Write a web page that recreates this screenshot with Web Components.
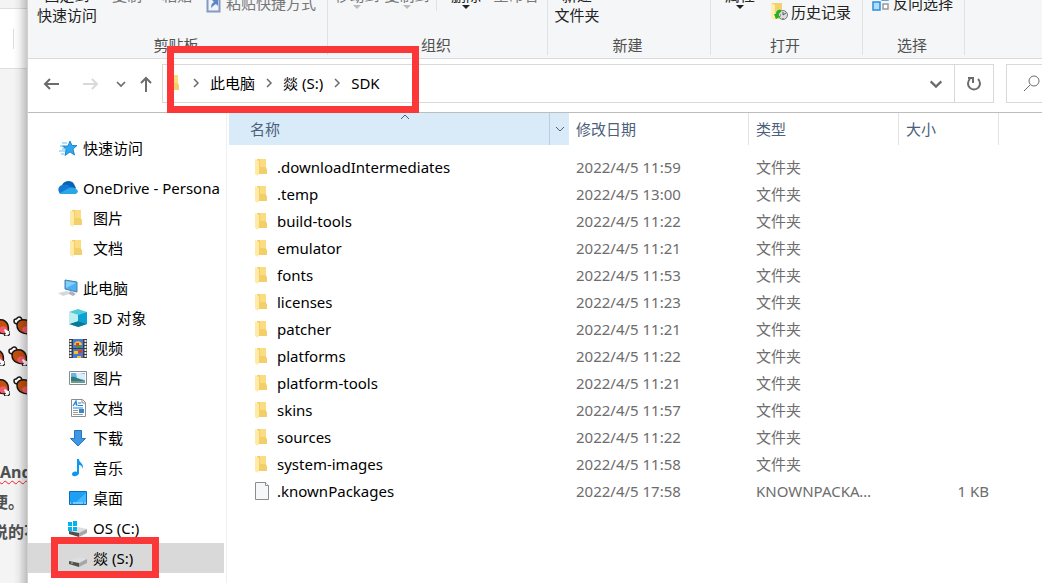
<!DOCTYPE html>
<html lang="zh-CN">
<head>
<meta charset="utf-8">
<title>SDK</title>
<style>
html, body { height: 100%; margin: 0; }
body {
  display: flex; overflow: hidden; background: #f4f4f4; color: #000;
  font: 15px/20px "Noto Sans", "Noto Sans CJK SC", sans-serif;
}
</style>
</head>
<body>
<editor-backdrop></editor-backdrop>
<explorer-window>
  <ribbon-bar slot="ribbon">
    <ribbon-group label="剪贴板" style="--w:300px">
      <ribbon-button style="--x:4px;--w:70px">固定到<br>快速访问</ribbon-button>
      <ribbon-button muted up style="--w:50px">复制</ribbon-button>
      <ribbon-button muted up style="--w:50px">粘贴</ribbon-button>
      <ribbon-button muted mid icon="shortcut" style="--x:2px;--w:112px">粘贴快捷方式</ribbon-button>
    </ribbon-group>
    <ribbon-group label="组织" style="--w:220px">
      <ribbon-button muted up caret style="--x:4px;--w:50px">移动到</ribbon-button>
      <ribbon-button muted up caret style="--w:50px">复制到</ribbon-button>
      <ribbon-button up caret divided style="--x:4px;--w:60px">删除</ribbon-button>
      <ribbon-button muted up style="--w:40px">重命名</ribbon-button>
    </ribbon-group>
    <ribbon-group label="新建" style="--w:163px">
      <ribbon-button style="--x:4px;--w:50px">新建<br>文件夹</ribbon-button>
    </ribbon-group>
    <ribbon-group label="打开" style="--w:152px">
      <ribbon-button up caret style="--x:4px;--w:50px">属性</ribbon-button>
      <ribbon-button low icon="history" style="--x:4px;--w:82px">历史记录</ribbon-button>
    </ribbon-group>
    <ribbon-group label="选择" style="--w:102px">
      <ribbon-button mid icon="invert" style="--x:7px;--w:84px">反向选择</ribbon-button>
    </ribbon-group>
  </ribbon-bar>
  <address-bar slot="address"></address-bar>
  <nav-tree slot="nav">
    <nav-item icon="star">快速访问</nav-item>
    <nav-item icon="cloud" gap>OneDrive - Persona</nav-item>
    <nav-item icon="folder" child>图片</nav-item>
    <nav-item icon="folder" child>文档</nav-item>
    <nav-item icon="pc" gap>此电脑</nav-item>
    <nav-item icon="cube" child>3D 对象</nav-item>
    <nav-item icon="video" child>视频</nav-item>
    <nav-item icon="picture" child>图片</nav-item>
    <nav-item icon="document" child>文档</nav-item>
    <nav-item icon="download" child>下载</nav-item>
    <nav-item icon="music" child>音乐</nav-item>
    <nav-item icon="desktop" child>桌面</nav-item>
    <nav-item icon="osdrive" child>OS (C:)</nav-item>
    <nav-item icon="drive" child selected>燚 (S:)</nav-item>
  </nav-tree>
  <file-list slot="files"></file-list>
</explorer-window>

<script>
const ICONS = {
  folder: ['0 0 20 20', '<path d="M4 2h9v9l1 1v5H5z" fill="#f3cf6c"/><path d="M7 2h6v8H7z" fill="#fbdc80"/><path d="M2 2l4 2v11l-1 4-3-2z" fill="#ffeaa6"/>'],
  file: ['0 0 20 20', '<path d="M2.500 1.500h10l3 3v14h-13z" fill="#f6f7f8" stroke="#8d8d8d"/><path d="M12.500 1.500v3h3" fill="#fff" stroke="#8d8d8d"/>'],
  shortcut: ['0 0 16 20', '<path d="M1.500 2.500h12v16h-12z" fill="#eef2fa" stroke="#8599bd" stroke-width="2"/><path d="M5 15c0-3 1-5 3-6L6 7h6v6l-2-2c-2 1-3 2-5 4z" fill="#5b86c2"/>'],
  history: ['0 0 20 20', '<path d="M2 1h11v16l-8 0-3-2z" fill="#f4d16f"/><path d="M2 1l4 2v12l-1 3-3-2z" fill="#ffeeb0"/><circle cx="14" cy="13" r="4.500" fill="#ddd" stroke="#777"/><path d="M14 10v3l3-2M11 13h1M14 17v-1" fill="none" stroke="#555"/><path d="M12 8c-3-1-5 1-5 4H5l2 5 5-3H9c0-2 1-3 3-4z" fill="#19b523"/>'],
  invert: ['0 0 20 20', '<g stroke-width="1.500"><path d="M3 1h5v5H3zM12 11h5v5h-5z" fill="#fff" stroke="#999"/><path d="M11 1h6v6h-6zM2 9h7v8H2z" fill="#b4dcfb" stroke="#2a8fe0"/></g>'],
  star: ['0 0 20 20', '<path d="M12 3l2 4.500h5l-4 3.500 1.500 6L12 14l-5 3.500 1-6L4.500 8H10z" fill="#2ea8ee" stroke="#1473bd" stroke-width=".8"/><path d="M4 5h5M2 8h4M4 11h4M1 13h6M3 16h3" stroke="#5fc1f5" stroke-width="1"/>'],
  cloud: ['0 0 20 20', '<path d="M4 7c2-4 9-6 12-1l2 4-3 3L4 9z" fill="#0a62b6"/><path d="M1 14c-2-4 1-7 4-7 3-1 5-1 7 2l4 3-6 4H4c-2 0-3-1-3-2z" fill="#137ad4"/><path d="M2 15l9-5c3-1 6 0 7 1 3 1 2 5-1 5H5c-1 0-2 0-3-1z" fill="#28a8ea"/>'],
  pc: ['0 0 20 20', '<path d="M7 2l12 2v10L7 11z" fill="#4bb1f4" stroke="#4a7fa8"/><path d="M8 3l10 2-10 5z" fill="#85d0fb"/><path d="M0 15l9-2 5 2-9 3z" fill="#d4d8dc"/><path d="M12 13l3 1 3 2-3 2-4-2z" fill="#acb2b8"/>'],
  cube: ['0 0 20 20', '<path d="M1 4l9 3v12l-9-3z" fill="#a8e6ec"/><path d="M10 7l9-3v12l-9 3z" fill="#1bb2dc"/><path d="M1 4l9-3 9 3-9 3z" fill="#51cbd6"/><path d="M1 16l9-3 9 3-9 3z" fill="#087a98"/><path d="M1 4l9 3v6l-9 3z" fill="#bceff1"/><path d="M10 7l9-3v12l-9-3z" fill="#0aa1d5"/>'],
  video: ['0 0 20 20', '<path d="M1 1h18v19H1z" fill="#3d3d3d"/><path d="M5 1h10v9H5zM5 11h10v9H5z" fill="#4777df"/><path d="M6 7c0-5 8-5 8 0z" fill="#f5c51e"/><path d="M8 5h3v4H8z" fill="#d44322"/><path d="M8 8h5v2H8z" fill="#3f9a38"/><path d="M10 12h4v3h-4z" fill="#d44322"/><path d="M6 13h4v3H6zM9 18h4v2H9z" fill="#f3c51e"/><path d="M2.500 2v18M17.500 2v18" stroke="#e9e9e9" stroke-width="2" stroke-dasharray="2 1"/>'],
  picture: ['0 0 20 20', '<path d="M1.500 3.500h17v13h-17z" fill="#fff" stroke="#8b8b8b"/><path d="M3 5h14v10H3z" fill="#6cb2eb"/><path d="M8 5c3-1 7 1 9 1v6l-8-2z" fill="#d8effb"/><path d="M3 9c4-1 6 2 14 4v2H3z" fill="#377c75"/><path d="M3 13h14v2H3z" fill="#699c93"/>'],
  document: ['0 0 20 20', '<path d="M3.500 1.500h11l3 3v14h-14z" fill="#fff" stroke="#8d8d8d"/><path d="M14 2v3h3" fill="none" stroke="#8d8d8d"/><path d="M5 8l3-5 1 5M6 6h3M10 5h3M10 7.500h5M5 10h10" fill="none" stroke="#2185d8" stroke-width="1.200"/><path d="M5 12.500h5M5 14.500h5M5 16.500h10" stroke="#999"/><path d="M11 11h5v4h-5z" fill="#3987c5"/>'],
  download: ['0 0 20 20', '<path d="M6.500 2.500h7v8h4L10 18 2.500 10.500h4z" fill="#3e96e4" stroke="#2476bd"/>'],
  music: ['0 0 20 20', '<path d="M9 1h2c0 4 5 4 4 10-1-3-2-4-4-4v8c0 3-7 5-7 1 0-2 3-3 5-2z" fill="#0f96f3"/>'],
  desktop: ['0 0 20 20', '<path d="M1.500 3.500h17v13h-17z" fill="#1d9ff5" stroke="#0871bd"/><path d="M8 14L18 5v9z" fill="#44b7ff"/><path d="M2 15h1m2 0h10m1 0h2" stroke="#d6f3ff"/>'],
  drive: ['0 0 20 20', '<path d="M1 13l9-4 9 2-8 5z" fill="#dedee0"/><path d="M1 13l10 2v4L1 16z" fill="#505050"/><path d="M11 15l8-4v4l-8 4z" fill="#a7a7a9"/><path d="M3 15h2" stroke="#a6ce9b"/>'],
  osdrive: ['0 0 20 20', '<path d="M1 13l9-4 9 2-8 5z" fill="#dedee0"/><path d="M1 13l10 2v4L1 16z" fill="#505050"/><path d="M11 15l8-4v4l-8 4z" fill="#a7a7a9"/><path d="M0 4h4v4H0zM5 3h4v5H5zM0 9h4v4H0zM5 9h4v4H5z" fill="#00b4ef"/>'],
  back: ['0 0 20 20', '<path d="M17 10H3M8 5l-5 5 5 5" fill="none" stroke="currentColor" stroke-width="2"/>'],
  forward: ['0 0 20 20', '<path d="M3 10h14M12 5l5 5-5 5" fill="none" stroke="currentColor" stroke-width="2"/>'],
  up: ['0 0 20 20', '<path d="M10 18V4M5 9l5-5 5 5" fill="none" stroke="currentColor" stroke-width="2"/>'],
  down: ['0 0 12 12', '<path d="M2 4l4 4 4-4" fill="none" stroke="currentColor" stroke-width="1.700"/>'],
  thin: ['0 0 12 12', '<path d="M2 4l4 4 4-4" fill="none" stroke="currentColor"/>'],
  sort: ['0 0 12 12', '<path d="M2 8l4-4 4 4" fill="none" stroke="currentColor"/>'],
  chevron: ['0 0 12 12', '<path d="M4 2l4 4-4 4" fill="none" stroke="currentColor" stroke-width="1.500"/>'],
  refresh: ['0 0 20 20', '<path d="M14 5a6 6 0 1 1-8 0M4 4h5v5" fill="none" stroke="currentColor" stroke-width="2"/>'],
  search: ['0 0 20 20', '<circle cx="13" cy="7" r="5" fill="none" stroke="currentColor"/><path d="M9 11l-6 6" stroke="currentColor"/>'],
  meat: ['0 0 20 20', '<path d="M5 8C3 8 1 7 1 5s1-2 2-2 1-2 3-2 3 2 3 4" fill="#fff" stroke="#161616" stroke-width="1.500"/><path d="M4 9c0-4 4-6 9-5 5 2 6 7 5 12-5 3-14 1-14-7z" fill="#c4500d" stroke="#161616" stroke-width="1.500"/><path d="M9 13c1-3 6-4 8-1l1 4c-3 2-8 2-9-3z" fill="#f5596c"/><path d="M14 14l2 4c1 1 2 0 2-1 2 0 2-2 0-2l-3-2z" fill="#fff"/><path d="M14 18l1 2h3l2-2v-3" fill="none" stroke="#161616" stroke-width="1.200"/>'],
};

function define(name, css, render) {
  customElements.define(name, class extends HTMLElement {
    connectedCallback() {
      if (this.shadowRoot) return;
      const root = this.attachShadow({ mode: 'open' });
      const t = document.createElement('template');
      t.innerHTML = `<style>${css}</style>${render(this)}`;
      root.append(t.content.cloneNode(true));
    }
  });
}

define('ex-icon',
  `:host{display:block;flex:none;width:var(--size,20px);height:var(--size,20px)} svg{display:block;width:100%;height:100%}`,
  el => { const [box, art] = ICONS[el.getAttribute('name')]; return `<svg viewBox="${box}" aria-hidden="true">${art}</svg>`; });

define('editor-backdrop', `
  :host{display:flex;flex-direction:column;flex:0 0 27px;position:relative;overflow:hidden;background:#f4f4f4;color:#505050;font-weight:700}
  :host::after{content:"";position:absolute;inset:0 0 0 auto;width:14px;background:linear-gradient(90deg,#0000,#0000000a 40%,#00000038)}
  .toolbar{flex:none;height:59px;margin-top:8px;border:solid #dedede;border-width:1px 0;background:#fff;display:flex;align-items:center}
  .toolbar i{width:1px;height:20px;margin-left:13px;background:#ddd}
  .emoji{display:grid;gap:10px;margin-top:247px}
  .emoji div{display:flex;gap:3px;margin-left:-10px}
  .emoji .odd{margin-left:-15px}
  p{margin:0;display:flex;white-space:nowrap;height:30px;line-height:30px;font-size:16px}
  .first{margin-top:61px}
  .shift{margin-left:-8px}
  .spell{text-decoration:underline wavy #e22 1px;text-underline-offset:2px}
`, () => {
  const pair = '<ex-icon name="meat"></ex-icon><ex-icon name="meat"></ex-icon>';
  return `<div class="toolbar"><i></i></div>
    <div class="emoji"><div>${pair}</div><div class="odd">${pair}</div><div>${pair}</div></div>
    <p class="first"><span class="spell">Android</span></p><p class="shift">便。</p><p class="shift">说的不</p>`;
});

define('explorer-window', `
  :host{display:flex;flex-direction:column;flex:1;min-width:0;background:#fff;border-left:1px solid #d0d0d0}
  .body{display:flex;flex:1;min-height:0;border-top:1px solid #bdbdbd}
`, () => `<slot name="ribbon"></slot><slot name="address"></slot>
  <div class="body"><slot name="nav"></slot><slot name="files"></slot></div>`);

define('ribbon-bar', `
  :host{display:flex;flex:none;height:58px;overflow:hidden;background:#f5f6f7;border-bottom:1px solid #dadbdc}
`, () => `<slot></slot>`);

define('ribbon-group', `
  :host{display:flex;flex-direction:column;justify-content:flex-end;flex:none;box-sizing:border-box;width:var(--w);height:55px;border-right:1px solid #e0e1e2}
  .items{display:flex;align-items:flex-end;height:35px}
  .label{text-align:center;color:#505050;padding-right:3px}
`, el => `<div class="items"><slot></slot></div><div class="label">${el.getAttribute('label')}</div>`);

define('ribbon-button', `
  :host{display:block;flex:none;width:var(--w);margin-left:var(--x,0);padding-bottom:10px}
  :host([up]){padding-bottom:30px}
  :host([up][caret]){padding-bottom:26px}
  :host([mid]){padding-bottom:22px}
  :host([low]){padding-bottom:13px}
  :host([divided]){background:linear-gradient(#e0e1e2,#e0e1e2) 0 0/1px calc(100% - 24px) no-repeat}
  button{display:flex;align-items:center;justify-content:center;width:100%;padding:0;border:0;background:none;color:#222;font:inherit;white-space:nowrap;gap:2px}
  :host([muted]) button{color:#777}
  :host([caret]) button{flex-direction:column;gap:0}
  i{width:0;height:0;border:solid transparent;border-width:4px 4px 0;border-top-color:#222}
  :host([muted]) i{border-top-color:#bbb}
`, el => {
  const icon = el.getAttribute('icon');
  return `<button type="button">${icon ? `<ex-icon name="${icon}"></ex-icon>` : ''}<span><slot></slot></span>${el.hasAttribute('caret') ? '<i></i>' : ''}</button>`;
});

define('address-bar', `
  :host{display:flex;align-items:center;flex:none;height:53px;box-sizing:border-box;padding:0 0 4px 14px;color:#6c6c6c}
  button{display:flex;align-items:center;justify-content:center;padding:0;border:0;background:none;color:inherit;font:inherit;height:30px}
  .nav{width:20px;margin-right:18px}
  .nav:disabled{color:#d9d9d9;margin-right:14px}
  .recent{width:14px;margin-right:8px}
  .up{width:20px;margin-right:6px}
  .box{display:flex;align-items:center;flex:1;min-width:0;box-sizing:border-box;height:39px;border:1px solid #d9d9d9;position:relative}
  nav{display:flex;align-items:center;flex:1;padding:0 0 2px 2px;gap:7px;--size:12px}
  nav .folder{--size:20px;margin-right:-2px}
  nav a{color:#000;text-decoration:none;white-space:nowrap;margin:0 1px}
  .drop{width:36px;--size:16px}
  .refresh{width:39px;height:37px;border-left:1px solid #d9d9d9}
  .find{display:flex;align-items:center;flex:0 0 36px;box-sizing:border-box;height:39px;margin-left:12px;padding-left:14px;border:1px solid #d9d9d9;border-right:0;overflow:hidden}
  .mark{position:absolute;left:4px;top:-19px;width:238px;height:53px;border:7px solid #fc3737;pointer-events:none}
`, () => `
  <button class="nav" aria-label="后退"><ex-icon name="back"></ex-icon></button>
  <button class="nav" aria-label="前进" disabled><ex-icon name="forward"></ex-icon></button>
  <button class="recent" aria-label="最近位置"><ex-icon name="down" style="--size:12px"></ex-icon></button>
  <button class="up" aria-label="上移"><ex-icon name="up"></ex-icon></button>
  <div class="box">
    <nav><ex-icon class="folder" name="folder"></ex-icon>
      <ex-icon name="chevron"></ex-icon><a href="#pc">此电脑</a>
      <ex-icon name="chevron"></ex-icon><a href="#s">燚 (S:)</a>
      <ex-icon name="chevron"></ex-icon><a href="#sdk">SDK</a></nav>
    <button class="drop" aria-label="以前的位置"><ex-icon name="down"></ex-icon></button>
    <button class="refresh" aria-label="刷新"><ex-icon name="refresh"></ex-icon></button>
    <div class="mark"></div>
  </div>
  <div class="find"><button aria-label="搜索"><ex-icon name="search"></ex-icon></button></div>`);

define('nav-tree', `
  :host{display:block;flex:0 0 199px;box-sizing:border-box;padding:20px 2px 0 0;border-right:1px solid #f0f0f0}
`, () => `<slot></slot>`);

define('nav-item', `
  :host{display:block;position:relative}
  :host([gap]){margin-top:10px}
  a{display:flex;align-items:center;gap:5px;height:30px;padding-left:30px;color:#000;text-decoration:none;white-space:nowrap}
  a span{overflow:hidden}
  :host([child]) a{padding-left:40px}
  :host([selected]) a{background:#d9d9d9}
  .mark{position:absolute;left:23px;top:-6px;width:94px;height:27px;border:7px solid #fc3737;pointer-events:none}
`, el => `<a href="#"><ex-icon name="${el.getAttribute('icon')}"></ex-icon><span><slot></slot></span></a>${el.hasAttribute('selected') ? '<div class="mark"></div>' : ''}`);

const FILES = [
  ['.downloadIntermediates', '11:59'], ['.temp', '13:00'], ['build-tools', '11:22'],
  ['emulator', '11:21'], ['fonts', '11:53'], ['licenses', '11:23'], ['patcher', '11:21'],
  ['platforms', '11:22'], ['platform-tools', '11:21'], ['skins', '11:57'],
  ['sources', '11:22'], ['system-images', '11:58'],
  ['.knownPackages', '17:58', 'KNOWNPACKAGES', '1 KB'],
];

define('file-list', `
  :host{display:block;flex:1;min-width:0;padding-left:2px;overflow:hidden}
  table{width:100%;table-layout:fixed;border-collapse:separate;border-spacing:0}
  .name{width:340px} .date{width:180px} .type{width:150px} .size{width:100px}
  th{position:relative;height:32px;padding:0 0 0 7px;box-sizing:border-box;font-weight:400;text-align:left;color:#4c607a}
  th.line{border-right:1px solid #e3e3e3}
  th button{padding:0;border:0;background:none;color:inherit;font:inherit}
  th.active{padding:0;background:#d9ebf9}
  .head{display:flex;align-items:center;height:32px;padding-left:21px}
  .head button:first-child{flex:1;text-align:left}
  .head .filter{display:flex;align-items:center;justify-content:center;width:20px;height:32px;border-left:1px solid #b9d0e4}
  ex-icon.glyph{--size:12px}
  ex-icon.sort{position:absolute;left:170px;top:-2px}
  td{height:27px;padding:0 7px;color:#6d6d6d;white-space:nowrap;overflow:hidden;text-overflow:ellipsis}
  td:first-child{padding-left:24px;color:#000}
  td:nth-child(3){padding-right:20px}
  td:nth-child(4){text-align:right;padding-right:10px}
  td div{display:flex;align-items:center;gap:4px}
  tbody::before{content:"";display:block;height:8px}
`, () => `<table>
  <colgroup><col class="name"><col class="date"><col class="type"><col class="size"><col></colgroup>
  <thead><tr>
    <th class="active"><div class="head"><button>名称</button><button class="filter" aria-label="筛选"><ex-icon class="glyph" name="thin"></ex-icon></button></div><ex-icon class="glyph sort" name="sort"></ex-icon></th>
    <th class="line"><button>修改日期</button></th><th class="line"><button>类型</button></th><th class="line"><button>大小</button></th><th></th>
  </tr></thead>
  <tbody>${FILES.map(([n, t, type, size]) => `<tr><td><div><ex-icon name="${type ? 'file' : 'folder'}"></ex-icon>${n}</div></td><td>2022/4/5 ${t}</td><td>${type || '文件夹'}</td><td>${size || ''}</td><td></td></tr>`).join('')}</tbody>
</table>`);
</script>
</body>
</html>
